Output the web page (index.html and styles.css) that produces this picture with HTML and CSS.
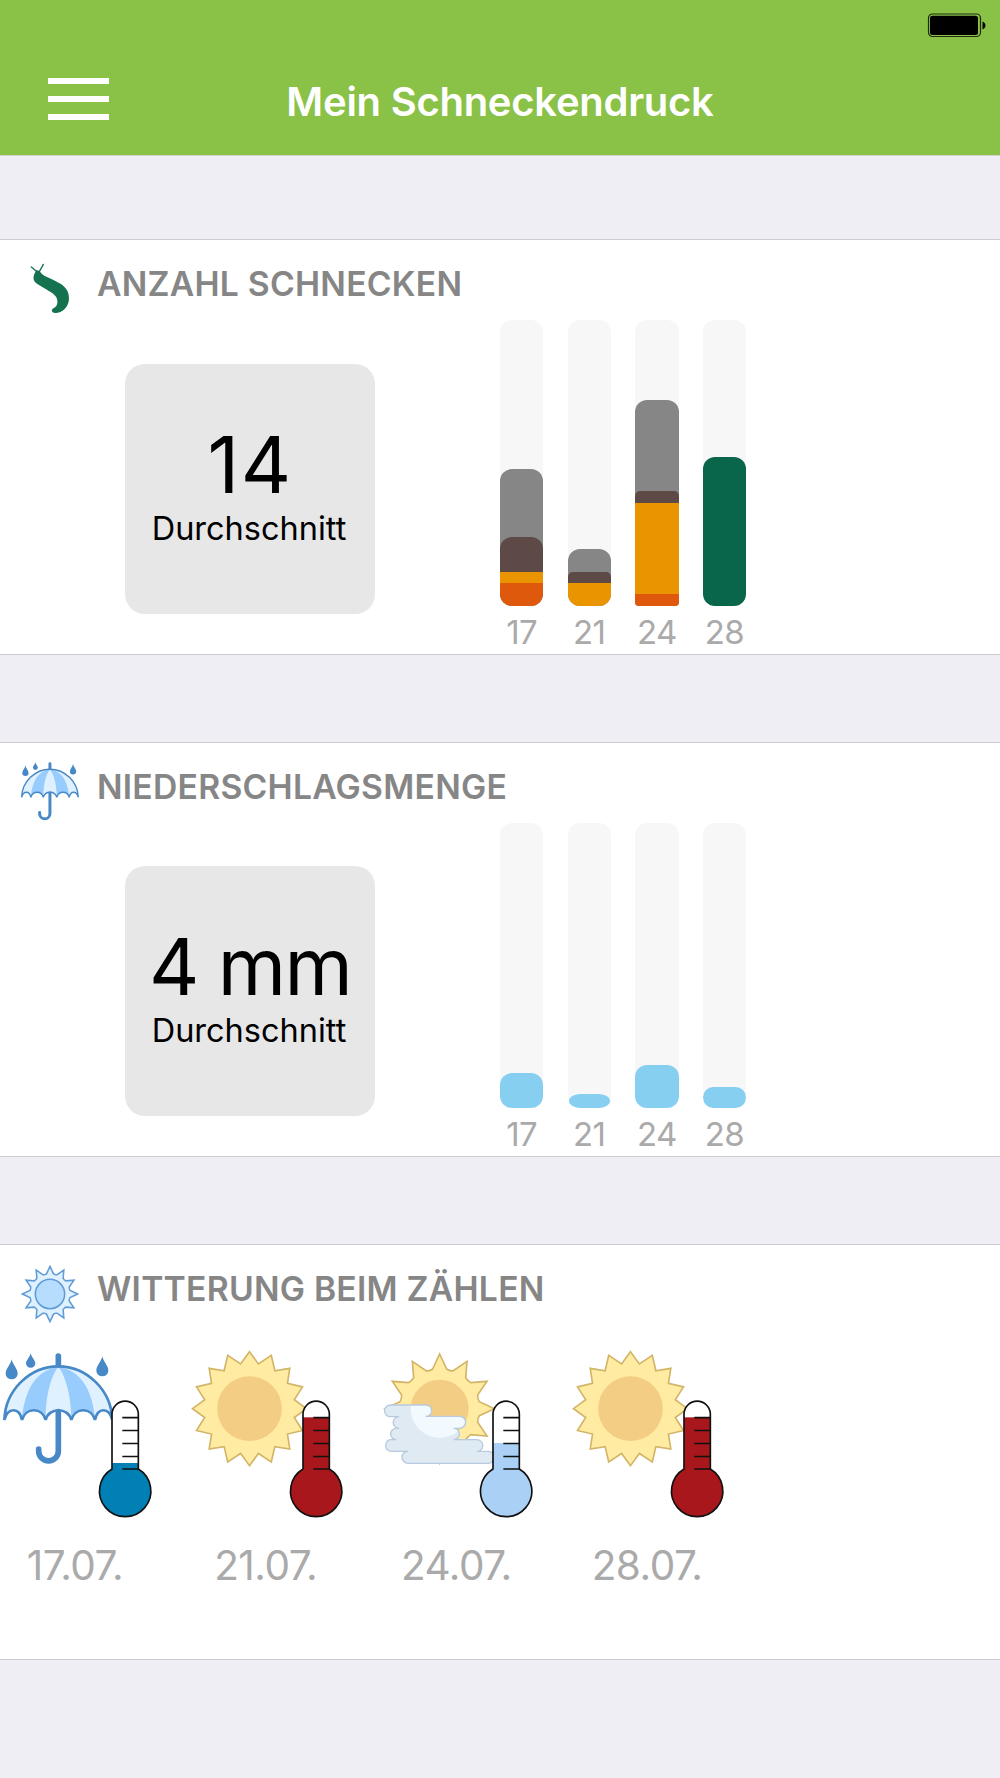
FILE: index.html
```html
<!DOCTYPE html>
<html lang="de">
<head>
    <meta charset="UTF-8">
    <meta name="viewport" content="width=device-width, initial-scale=1.0">
    <title>Mein Schneckendruck</title>
    <link rel="stylesheet" href="styles.css">
</head>
<body>
    <!-- shared icons -->
    <svg class="sprite" width="0" height="0">
        <symbol id="umbrella" viewBox="4 38 337 337">
            <path fill="#dff0fe" d="M13 238C16 150 90 79 175 79S334 150 337 238C327 201 293 201 285 238C275 201 224 201 214 238C204 201 147 201 137 238C127 201 76 201 66 238C58 201 23 201 13 238Z"/>
            <path fill="#98ccfd" d="M175 80C110 92 78 140 66 230C80 203 123 203 137 230C138 160 155 105 175 80C195 105 212 160 214 230C224 203 275 203 285 230C273 140 240 92 175 80Z"/>
            <path fill="none" stroke="#4788c7" stroke-width="8" d="M13 240C16 150 90 79 175 79S334 150 337 240C327 201 293 201 285 240C275 201 224 201 214 240C204 201 147 201 137 240C127 201 76 201 66 240C58 201 23 201 13 240Z"/>
            <path fill="none" stroke="#4788c7" stroke-width="17" stroke-linecap="round" d="M175 48V74"/>
            <path fill="none" stroke="#4788c7" stroke-width="17" stroke-linecap="round" d="M175 215V333A29.500 29.500 0 0 1 116 333V327"/>
            <path fill="#4788c7" d="M35 58C39 76 53 86 53 101A18 17 0 0 1 17 101C17 86 31 76 35 58ZM92 40C95 53 106 61 106 70A14 13 0 0 1 78 70C78 61 89 53 92 40ZM307 49C311 67 325 77 325 92A18 17 0 0 1 289 92C289 77 303 67 307 49Z"/>
        </symbol>
        <symbol id="sun12" viewBox="-172 -172 344 344">
            <path d="M0-164L21-119Q31-112 41-114L82-142L78-93Q84-84 93-78L142-82L114-41Q114-28 119-21L164 0L119 21Q114 28 114 41L142 82L93 78Q84 84 78 93L82 142L41 114Q31 112 21 119L0 164L-21 119Q-31 112-41 114L-82 142L-78 93Q-84 84-93 78L-142 82L-114 41Q-114 28-119 21L-164 0L-119-21Q-114-28-114-41L-142-82L-93-78Q-84-84-78-93L-82-142L-41-114Q-31-112-21-119Z"/>
        </symbol>
        <symbol id="sun16" viewBox="-180 -180 360 360">
            <path fill="#ffeca2" stroke="#d3b568" stroke-width="5" d="M0-171L26.700-134.400L65.400-160L76.100-113.900L120.900-120.900L113.900-76.100L159-65.400L134.400-26.700L171 0L134.400 26.700L159 65.400L113.900 76.100L120.900 120.900L76.100 113.900L65.400 160L26.700 134.400L0 171L-26.700 134.400L-65.400 160L-76.100 113.900L-120.900 120.900L-113.900 76.100L-159 65.400L-134.400 26.700L-171 0L-134.400-26.700L-159-65.400L-113.900-76.100L-120.900-120.900L-76.100-113.900L-65.400-160L-26.700-134.400Z"/>
            <circle r="97" fill="#f3cd84"/>
        </symbol>
        <symbol id="thermometer" viewBox="0 0 450 570" overflow="visible">
            <path fill="none" stroke="#111" stroke-width="5" d="M336 387V223A39.500 39.500 0 0 1 415 223V387A77 77 0 1 1 336 387Z"/>
            <path stroke="#111" stroke-width="5" d="M367 233H415M367 271.500H415M367 310.500H415M367 349.500H415M367 387H415"/>
        </symbol>
        <clipPath id="tube">
            <path d="M336 387V223A39.500 39.500 0 0 1 415 223V387A77 77 0 1 1 336 387Z"/>
        </clipPath>
        <clipPath id="cloudClip">
            <path d="M30 195H136A17 17 0 0 1 134 229H236A18 18 0 0 1 236 265H218A17 17 0 0 1 218 299H288A17.500 17.500 0 0 1 288 334H322A18 18 0 0 1 322 370H81A18 18 0 0 1 81 334H28A18 18 0 0 1 28 299H46A17 17 0 0 1 46 265H54A17 17 0 0 1 54 230H28A17.500 17.500 0 0 1 28 195Z"/>
        </clipPath>
    </svg>

    <header class="navbar">
        <div class="statusbar">
            <svg class="battery" width="60" height="25" viewBox="0 0 60 25">
                <rect x="1.500" y="1" width="52" height="22.500" rx="4" fill="none" stroke="#1d2a0e" stroke-width="1.200"/>
                <rect x="3" y="2.700" width="48" height="19.300" rx="2.500"/>
                <path d="M55.500 8.500C59.500 10 59.500 15 55.500 16.500Z"/>
            </svg>
        </div>
        <div class="navbar-row">
            <button class="menu" aria-label="Menü">
                <span></span>
                <span></span>
                <span></span>
            </button>
            <h1>Mein Schneckendruck</h1>
        </div>
    </header>

    <main>
        <section class="card">
            <div class="card-header">
                <div class="card-icon">
                    <svg width="40" height="53" viewBox="90 97 120 159">
                        <path fill="#14724f" d="M109 122C121 121 121 132 133 138C150 147 168 153 184 164C198 174 207 186 207 207C206 232 187 250 166 250C155 250 152 240 161 235C172 231 174 219 171 208C168 196 153 188 142 181L112 163C101 156 98 147 103 133Z"/>
                        <path fill="none" stroke="#14724f" stroke-width="4" stroke-linecap="round" d="M94 112L111 126M130 104L118 126"/>
                    </svg>
                </div>
                <h2>Anzahl Schnecken</h2>
            </div>
            <div class="card-body">
                <div class="summary">
                    <div class="tile">
                        <div class="tile-value">14</div>
                        <div class="tile-label">Durchschnitt</div>
                    </div>
                </div>
                <div class="chart">
                    <div class="column">
                        <div class="track">
                            <div class="bar" style="height: 136.8px">
                                <div class="seg brown" style="height: 34.2px"></div>
                                <div class="seg orange" style="height: 11.8px"></div>
                                <div class="seg red" style="height: 22.5px"></div>
                            </div>
                        </div>
                        <div class="day">17</div>
                    </div>
                    <div class="column">
                        <div class="track">
                            <div class="bar" style="height: 57.3px">
                                <div class="seg brown flat" style="height: 11.8px"></div>
                                <div class="seg orange" style="height: 22.5px"></div>
                            </div>
                        </div>
                        <div class="day">21</div>
                    </div>
                    <div class="column">
                        <div class="track">
                            <div class="bar tight" style="height: 206.3px">
                                <div class="seg brown flat" style="height: 11.4px"></div>
                                <div class="seg orange" style="height: 91.6px"></div>
                                <div class="seg red" style="height: 11.4px"></div>
                            </div>
                        </div>
                        <div class="day">24</div>
                    </div>
                    <div class="column">
                        <div class="track">
                            <div class="bar green" style="height: 148.8px"></div>
                        </div>
                        <div class="day">28</div>
                    </div>
                </div>
            </div>
        </section>

        <section class="card">
            <div class="card-header">
                <div class="card-icon">
                    <svg width="59" height="59"><use href="#umbrella"/></svg>
                </div>
                <h2>Niederschlagsmenge</h2>
            </div>
            <div class="card-body">
                <div class="summary">
                    <div class="tile">
                        <div class="tile-value mm">4 mm</div>
                        <div class="tile-label">Durchschnitt</div>
                    </div>
                </div>
                <div class="chart">
                    <div class="column">
                        <div class="track"><div class="bar rain" style="height: 35.7px"></div></div>
                        <div class="day">17</div>
                    </div>
                    <div class="column">
                        <div class="track"><div class="bar rain narrow" style="height: 14.3px"></div></div>
                        <div class="day">21</div>
                    </div>
                    <div class="column">
                        <div class="track"><div class="bar rain" style="height: 43px"></div></div>
                        <div class="day">24</div>
                    </div>
                    <div class="column">
                        <div class="track"><div class="bar rain" style="height: 21.7px"></div></div>
                        <div class="day">28</div>
                    </div>
                </div>
            </div>
        </section>

        <section class="card">
            <div class="card-header">
                <div class="card-icon">
                    <svg width="58" height="58" viewBox="-172 -172 344 344">
                        <use href="#sun12" x="-172" y="-172" width="344" height="344" fill="#dff0fe" stroke="#5f9bd6" stroke-width="9"/>
                        <circle r="87" fill="#b6dcfe" stroke="#5f9bd6" stroke-width="9"/>
                    </svg>
                </div>
                <h2>Witterung beim Zählen</h2>
            </div>
            <div class="weather">
                <div class="weather-item">
                    <svg class="weather-icon" viewBox="0 0 450 570">
                        <use href="#umbrella" x="4" y="38" width="337" height="337"/>
                        <g clip-path="url(#tube)">
                            <rect x="290" y="180" width="170" height="360" fill="#fff"/>
                            <rect x="290" y="369" width="170" height="171" fill="#0080b5"/>
                        </g>
                        <use href="#thermometer" width="450" height="570"/>
                    </svg>
                    <div class="date">17.07.</div>
                </div>
                <div class="weather-item">
                    <svg class="weather-icon" viewBox="0 0 450 570">
                        <use href="#sun16" x="-4.500" y="26" width="360" height="360"/>
                        <g clip-path="url(#tube)">
                            <rect x="290" y="180" width="170" height="360" fill="#fff"/>
                            <rect x="290" y="232" width="170" height="308" fill="#a7171b"/>
                        </g>
                        <use href="#thermometer" width="450" height="570"/>
                    </svg>
                    <div class="date">21.07.</div>
                </div>
                <div class="weather-item">
                    <svg class="weather-icon" viewBox="0 0 450 570">
                        <use href="#sun12" x="4" y="34" width="344" height="344" fill="#ffeca2" stroke="#d3b568" stroke-width="5"/>
                        <circle cx="176" cy="206" r="87" fill="#f3cd84"/>
                        <g clip-path="url(#cloudClip)">
                            <rect x="0" y="180" width="360" height="200" fill="#dfeaf2"/>
                            <circle cx="176" cy="206" r="87" fill="#f2f9ff"/>
                        </g>
                        <path fill="none" stroke="#b7cadf" stroke-width="4" d="M30 195H136A17 17 0 0 1 134 229H236A18 18 0 0 1 236 265H218A17 17 0 0 1 218 299H288A17.500 17.500 0 0 1 288 334H322A18 18 0 0 1 322 370H81A18 18 0 0 1 81 334H28A18 18 0 0 1 28 299H46A17 17 0 0 1 46 265H54A17 17 0 0 1 54 230H28A17.500 17.500 0 0 1 28 195Z"/>
                        <g clip-path="url(#tube)">
                            <rect x="290" y="180" width="170" height="360" fill="#fff"/>
                            <rect x="290" y="309" width="170" height="231" fill="#aad1f5"/>
                        </g>
                        <use href="#thermometer" width="450" height="570"/>
                    </svg>
                    <div class="date">24.07.</div>
                </div>
                <div class="weather-item">
                    <svg class="weather-icon" viewBox="0 0 450 570">
                        <use href="#sun16" x="-4.500" y="26" width="360" height="360"/>
                        <g clip-path="url(#tube)">
                            <rect x="290" y="180" width="170" height="360" fill="#fff"/>
                            <rect x="290" y="232" width="170" height="308" fill="#a7171b"/>
                        </g>
                        <use href="#thermometer" width="450" height="570"/>
                    </svg>
                    <div class="date">28.07.</div>
                </div>
            </div>
        </section>
    </main>
</body>
</html>
```
FILE: styles.css
```css
* {
    margin: 0;
    padding: 0;
    box-sizing: border-box;
}

body {
    font-family: Inter, Roboto, sans-serif;
    background: #efeef4;
    min-height: 1778px;
}

.sprite {
    position: absolute;
}

.navbar {
    height: 156px;
    background: #8ac248;
    border-bottom: 1px solid #cfd3cb;
}

.statusbar {
    display: flex;
    justify-content: flex-end;
    height: 60px;
    padding: 12.500px 13px 0 0;
}

.navbar-row {
    display: grid;
    grid-template-columns: 200px 1fr 200px;
    height: 84px;
}

.menu {
    display: flex;
    flex-direction: column;
    gap: 12px;
    width: 61px;
    margin: 17.500px 0 0 48px;
    background: none;
    border: none;
}

.menu span {
    height: 6.300px;
    background: white;
}

h1 {
    text-align: center;
    font-size: 40px;
    line-height: 84px;
    font-weight: 600;
    letter-spacing: -0.26px;
    color: white;
}

main {
    display: flex;
    flex-direction: column;
    gap: 87px;
    padding-top: 83.300px;
}

.card {
    height: 415.500px;
    background: white;
    border-top: 1px solid #cdccd2;
    border-bottom: 1px solid #cdccd2;
}

.card-header {
    display: flex;
    height: 80px;
}

.card-icon {
    display: flex;
    align-items: center;
    justify-content: center;
    width: 97px;
    height: 97px;
    padding-left: 2px;
}

h2 {
    padding-top: 24px;
    font-size: 33.700px;
    line-height: 40px;
    font-weight: 600;
    letter-spacing: 0.230px;
    text-transform: uppercase;
    white-space: nowrap;
    color: #868686;
}

.card-body {
    display: flex;
}

.summary {
    display: flex;
    justify-content: center;
    width: 500px;
    padding-top: 43.500px;
}

.tile {
    width: 250px;
    height: 250px;
    padding-top: 52px;
    border-radius: 20px;
    background: #e7e7e7;
    text-align: center;
    white-space: nowrap;
    color: black;
}

.tile-value {
    font-size: 78px;
    line-height: 98px;
    letter-spacing: 1.500px;
}

.tile-value.mm {
    letter-spacing: -1.700px;
}

.tile-label {
    padding-right: 2px;
    font-size: 32.500px;
    line-height: 30px;
}

.chart {
    display: flex;
    gap: 24.200px;
}

.column {
    width: 43.400px;
}

.track {
    display: flex;
    align-items: flex-end;
    height: 285.500px;
    border-radius: 12px;
    background: #f7f7f7;
}

.bar {
    display: flex;
    flex-direction: column;
    justify-content: flex-end;
    width: 100%;
    border-radius: 12px;
    background: #868686;
    overflow: hidden;
}

.bar.tight {
    border-radius: 12px 12px 4px 4px;
}

.bar.green {
    background: #0a664b;
}

.bar.rain {
    background: #87cff1;
}

.bar.narrow {
    width: 41px;
    margin: 0 auto;
    border-radius: 12px / 50%;
}

.seg.brown {
    background: #5d4a47;
    border-radius: 12px 12px 0 0;
}

.seg.brown.flat {
    border-radius: 5px 5px 0 0;
}

.seg.orange {
    background: #ea9500;
}

.seg.red {
    background: #de590c;
}

.day {
    display: flex;
    justify-content: center;
    padding-top: 6px;
    font-size: 33px;
    line-height: 41px;
    font-weight: 400;
    letter-spacing: -0.600px;
    color: #aaa;
}

.weather {
    display: flex;
    gap: 40.700px;
    padding-top: 14.700px;
}

.weather-item {
    width: 150px;
}

.weather-icon {
    display: block;
    width: 150px;
    height: 190px;
    overflow: visible;
}

.date {
    text-align: center;
    font-size: 40.500px;
    line-height: 72px;
    font-weight: 400;
    letter-spacing: -0.500px;
    color: #aaa;
}
```
